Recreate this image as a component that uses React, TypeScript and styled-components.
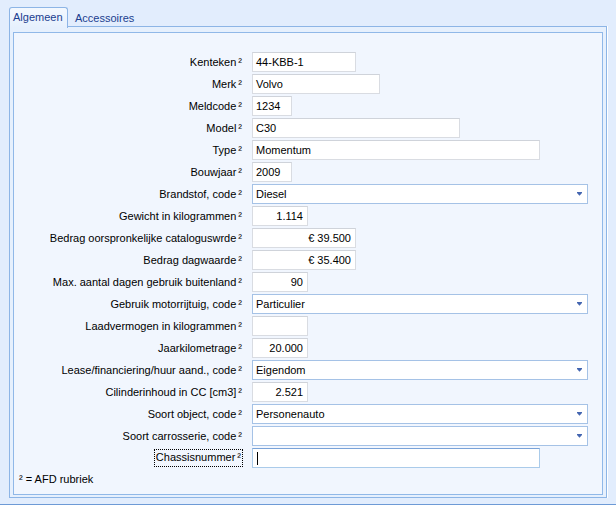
import React from "react";
import styled, { createGlobalStyle } from "styled-components";

const Global = createGlobalStyle`
  html, body { margin: 0; padding: 0; }
  body {
    background: #e2edfd;
    font-family: "Liberation Sans", Arial, sans-serif;
    font-size: 11px;
    color: #000;
  }
`;

const Window = styled.div`
  width: 616px;
  height: 505px;
  box-sizing: border-box;
  padding-top: 7px;
  display: flex;
  flex-direction: column;
  overflow: hidden;
`;

const TabStrip = styled.div`
  display: flex;
  align-items: flex-end;
  height: 19px;
  margin-left: 9px;
  position: relative;
  z-index: 1;
`;

const Tab = styled.div<{ $active?: boolean }>`
  box-sizing: border-box;
  width: ${(p) => (p.$active ? "59px" : "auto")};
  height: ${(p) => (p.$active ? "21px" : "19px")};
  margin-bottom: ${(p) => (p.$active ? "-2px" : "0")};
  padding: ${(p) => (p.$active ? "3px 0 0 3px" : "4px 6px 0 6px")};
  color: #1b3d8f;
  font-size: 11px;
  line-height: 13px;
  border: ${(p) => (p.$active ? "1px solid #8db5e6" : "1px solid transparent")};
  border-bottom: none;
  border-radius: 3px 3px 0 0;
  background: ${(p) => (p.$active ? "linear-gradient(#f3f8fe, #e6f0fd)" : "transparent")};
`;

const OuterPanel = styled.div`
  box-sizing: border-box;
  margin: 0 9px 0 9px;
  height: 472px;
  border: 1px solid #8db5e6;
  box-shadow: 1px 0 0 #ffffff;
  background: #e6f0fd;
  padding: 5px 3px 2px 3px;
`;

const InnerPanel = styled.div`
  box-sizing: border-box;
  height: 463px;
  border: 1px solid #90b8e8;
  background: #f1f6fe;
  padding: 19px 0 0 4px;
  display: flex;
  flex-direction: column;
`;

const Form = styled.div`
  display: grid;
  grid-template-columns: 226px 1fr;
  column-gap: 8px;
  row-gap: 2px;
  grid-auto-rows: 20px;
`;

const Label = styled.div`
  display: flex;
  align-items: center;
  justify-content: flex-end;
  white-space: nowrap;
  padding-right: 2px;
`;

const FocusLabel = styled.span`
  outline: 1px dotted #000;
  outline-offset: 0px;
  padding: 1px 1px 2px 1px;
  line-height: 13px;
`;

const Sup = styled.span`
  font-size: 11px;
  margin-left: 2px;
`;

const Box = styled.div<{ $w: number; $right?: boolean }>`
  box-sizing: border-box;
  width: ${(p) => p.$w}px;
  height: 20px;
  background: #ffffff;
  border: 1px solid #d9dce2;
  border-top-color: #cfd3da;
  display: flex;
  align-items: center;
  justify-content: ${(p) => (p.$right ? "flex-end" : "flex-start")};
  padding: ${(p) => (p.$right ? "0 4px 0 0" : "0 0 0 3px")};
  white-space: nowrap;
`;

const FocusBox = styled(Box)`
  border-color: #aacbea;
  border-top-color: #7aa3d8;
`;

const SelectBox = styled.div<{ $w: number }>`
  box-sizing: border-box;
  width: ${(p) => p.$w}px;
  height: 20px;
  background: #ffffff;
  border: 1px solid #a5c2e6;
  display: flex;
  align-items: center;
  justify-content: space-between;
  padding: 0 5px 0 3px;
  white-space: nowrap;
`;

const Caret = styled.span`
  display: inline-block;
  width: 1px;
  height: 13px;
  background: #000;
  margin-left: 1px;
`;

const Footer = styled.div`
  margin-top: 4px;
  padding-left: 1px;
  line-height: 14px;
`;

const BottomEdge = styled.div`
  margin-top: 6px;
  height: 2px;
  border-top: 1px solid #6d9ad6;
  background: #cfe0f8;
`;

const Arrow = () => (
  <svg width="5" height="4" viewBox="0 0 5 4">
    <rect x="0" y="0" width="5" height="1" fill="#4466b0" />
    <polygon points="0,1 5,1 2.5,3.8" fill="#4466b0" />
  </svg>
);

type Row =
  | { label: string; kind: "text"; w: number; value: string; right?: boolean }
  | { label: string; kind: "select"; value: string }
  | { label: string; kind: "focus"; w: number };

const rows: Row[] = [
  { label: "Kenteken", kind: "text", w: 104, value: "44-KBB-1" },
  { label: "Merk", kind: "text", w: 128, value: "Volvo" },
  { label: "Meldcode", kind: "text", w: 40, value: "1234" },
  { label: "Model", kind: "text", w: 208, value: "C30" },
  { label: "Type", kind: "text", w: 288, value: "Momentum" },
  { label: "Bouwjaar", kind: "text", w: 40, value: "2009" },
  { label: "Brandstof, code", kind: "select", value: "Diesel" },
  { label: "Gewicht in kilogrammen", kind: "text", w: 56, value: "1.114", right: true },
  { label: "Bedrag oorspronkelijke cataloguswrde", kind: "text", w: 104, value: "€ 39.500", right: true },
  { label: "Bedrag dagwaarde", kind: "text", w: 104, value: "€ 35.400", right: true },
  { label: "Max. aantal dagen gebruik buitenland", kind: "text", w: 56, value: "90", right: true },
  { label: "Gebruik motorrijtuig, code", kind: "select", value: "Particulier" },
  { label: "Laadvermogen in kilogrammen", kind: "text", w: 56, value: "", right: true },
  { label: "Jaarkilometrage", kind: "text", w: 56, value: "20.000", right: true },
  { label: "Lease/financiering/huur aand., code", kind: "select", value: "Eigendom" },
  { label: "Cilinderinhoud in CC [cm3]", kind: "text", w: 56, value: "2.521", right: true },
  { label: "Soort object, code", kind: "select", value: "Personenauto" },
  { label: "Soort carrosserie, code", kind: "select", value: "" },
  { label: "Chassisnummer", kind: "focus", w: 288 },
];

export default function App() {
  return (
    <>
      <Global />
      <Window>
        <TabStrip>
          <Tab $active>Algemeen</Tab>
          <Tab>Accessoires</Tab>
        </TabStrip>
        <OuterPanel>
          <InnerPanel>
            <Form>
              {rows.map((r) => (
                <React.Fragment key={r.label}>
                  <Label>
                    {r.kind === "focus" ? (
                      <FocusLabel>
                        {r.label}
                        <Sup>²</Sup>
                      </FocusLabel>
                    ) : (
                      <>
                        {r.label}
                        <Sup>²</Sup>
                      </>
                    )}
                  </Label>
                  {r.kind === "text" && (
                    <Box $w={r.w} $right={r.right}>
                      {r.value}
                    </Box>
                  )}
                  {r.kind === "select" && (
                    <SelectBox $w={336}>
                      <span>{r.value}</span>
                      <Arrow />
                    </SelectBox>
                  )}
                  {r.kind === "focus" && (
                    <FocusBox $w={r.w}>
                      <Caret />
                    </FocusBox>
                  )}
                </React.Fragment>
              ))}
            </Form>
            <Footer>² = AFD rubriek</Footer>
          </InnerPanel>
        </OuterPanel>
        <BottomEdge />
      </Window>
    </>
  );
}
